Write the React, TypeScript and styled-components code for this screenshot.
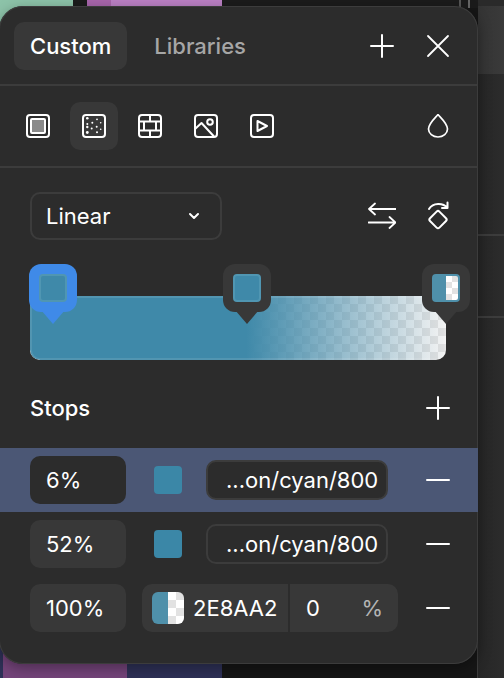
import styled, { createGlobalStyle } from "styled-components";

const GlobalStyle = createGlobalStyle`
  html, body {
    margin: 0;
    padding: 0;
    background: #161616;
  }
  * {
    box-sizing: border-box;
  }
`;

const CHECKER =
  "repeating-conic-gradient(#e0e0e0 0% 25%, #f3f3f3 0% 50%) 0 0 / 16px 16px";

const Scene = styled.div`
  position: relative;
  width: 504px;
  height: 678px;
  overflow: hidden;
  font-family: Inter, "Liberation Sans", sans-serif;
  color: #fff;
`;

// what shows around the popover
const Patch = styled.div<{ $x: number; $y: number; $w: number; $h: number; $bg: string }>`
  position: absolute;
  left: ${(p) => p.$x}px;
  top: ${(p) => p.$y}px;
  width: ${(p) => p.$w}px;
  height: ${(p) => p.$h}px;
  background: ${(p) => p.$bg};
`;

const Panel = styled.div`
  position: relative;
  width: 479px;
  height: 658px;
  margin: 6px 0 0 -1px;
  padding-left: 1px;
  background: #2c2c2c;
  border-radius: 24px;
  box-shadow: inset 0 0 0 1px #3c3c3c, 0 4px 14px rgba(0, 0, 0, 0.35);
`;

const Header = styled.div`
  display: flex;
  align-items: center;
  height: 80px;
  padding: 16px 16px 14px 14px;
  border-bottom: 2px solid #3c3c3c;
`;

const Tab = styled.div<{ $active?: boolean }>`
  display: flex;
  align-items: center;
  height: 48px;
  padding: 0 16px;
  margin-right: 9px;
  border-radius: 10px;
  font-size: 22px;
  font-weight: 500;
  color: ${(p) => (p.$active ? "#ffffff" : "#a6a6a6")};
  background: ${(p) => (p.$active ? "#383838" : "transparent")};

  & + & {
    margin-left: 2px;
  }
`;

const Spacer = styled.div`
  flex: 1;
`;

const Actions = styled.div`
  display: flex;
  gap: 8px;
`;

const IconButton = styled.div<{ $active?: boolean }>`
  display: flex;
  align-items: center;
  justify-content: center;
  flex: none;
  width: 48px;
  height: 48px;
  border-radius: 10px;
  background: ${(p) => (p.$active ? "#383838" : "transparent")};
`;

const Toolbar = styled.div`
  display: flex;
  align-items: center;
  gap: 8px;
  height: 82px;
  padding: 0 16px 0 14px;
  border-bottom: 2px solid #3c3c3c;
`;

const ControlRow = styled.div`
  display: flex;
  align-items: center;
  gap: 8px;
  padding: 24px 16px 0 30px;
`;

const Select = styled.div`
  display: flex;
  align-items: center;
  justify-content: space-between;
  width: 192px;
  height: 48px;
  padding: 0 20px 0 14px;
  border: 2px solid #3c3c3c;
  border-radius: 10px;
  font-size: 22px;
`;

const Track = styled.div`
  position: relative;
  width: 416px;
  height: 96px;
  margin: 24px 0 0 30px;
`;

const Bar = styled.div`
  position: absolute;
  left: 0;
  right: 0;
  bottom: 0;
  height: 64px;
  border-radius: 10px;
  overflow: hidden;
  background: ${CHECKER};

  &::after {
    content: "";
    position: absolute;
    inset: 0;
    border-radius: 10px;
    background: linear-gradient(to right, #3f89a9 52%, rgba(63, 137, 169, 0) 100%);
    box-shadow: inset 0 0 0 2px rgba(255, 255, 255, 0.1);
  }
`;

const Pin = styled.div<{ $left: number; $active?: boolean }>`
  position: absolute;
  top: 0;
  left: ${(p) => p.$left}px;
  display: flex;
  align-items: center;
  justify-content: center;
  width: 48px;
  height: 48px;
  border-radius: 12px;
  background: ${(p) => (p.$active ? "#3f8ae8" : "#383838")};

  &::after {
    content: "";
    position: absolute;
    left: 12px;
    top: 46px;
    width: 24px;
    height: 14px;
    background: inherit;
    clip-path: polygon(0 0, 100% 0, 50% 100%);
  }
`;

const PinSwatch = styled.div<{ $split?: boolean }>`
  width: 28px;
  height: 28px;
  border-radius: 4px;
  border: 2px solid ${(p) => (p.$split ? "#4f90aa" : "#5096b2")};
  background: ${(p) =>
    p.$split
      ? `linear-gradient(to right, #4f90aa 50%, transparent 50%), repeating-conic-gradient(#e2e2e2 0% 25%, #ffffff 0% 50%) 0 0 / 12px 12px`
      : "#3f89a9"};
`;

const StopsHeader = styled.div`
  display: flex;
  align-items: center;
  justify-content: space-between;
  height: 48px;
  margin: 24px 16px 16px 30px;
  font-size: 22px;
  font-weight: 500;
`;

const StopRow = styled.div<{ $selected?: boolean }>`
  display: flex;
  align-items: center;
  height: 64px;
  padding: 0 16px 0 30px;
  background: ${(p) => (p.$selected ? "#4b5775" : "transparent")};
`;

const Position = styled.div<{ $selected?: boolean }>`
  display: flex;
  align-items: center;
  flex: none;
  width: 96px;
  height: 48px;
  padding-left: 16px;
  border-radius: 10px;
  font-size: 22px;
  background: ${(p) => (p.$selected ? "#2c2c2c" : "#383838")};
`;

const Swatch = styled.div`
  flex: none;
  width: 28px;
  height: 28px;
  margin: 0 24px 0 28px;
  border-radius: 4px;
  background: #3b87a7;
`;

const Token = styled.div<{ $selected?: boolean }>`
  display: flex;
  align-items: center;
  flex: none;
  width: 182px;
  height: 40px;
  padding-left: 18px;
  border: 2px solid #3c3c3c;
  border-radius: 10px;
  font-size: 22px;
  white-space: nowrap;
  background: ${(p) => (p.$selected ? "#2c2c2c" : "transparent")};
`;

const ColorField = styled.div`
  display: flex;
  align-items: center;
  flex: none;
  width: 256px;
  height: 48px;
  margin-left: 16px;
  border-radius: 10px;
  background: #383838;
  font-size: 22px;
`;

const HexPart = styled.div`
  display: flex;
  align-items: center;
  gap: 9px;
  width: 148px;
  height: 100%;
  padding-left: 10px;
  border-right: 2px solid #2c2c2c;
`;

const HexSwatch = styled.div`
  flex: none;
  width: 32px;
  height: 32px;
  border-radius: 6px;
  background: linear-gradient(to right, #4f90aa 50%, transparent 50%),
    repeating-conic-gradient(#e2e2e2 0% 25%, #ffffff 0% 50%) 0 0 / 16px 16px;
`;

const AlphaPart = styled.div`
  display: flex;
  align-items: center;
  justify-content: space-between;
  flex: 1;
  padding: 0 15px 0 16px;
`;

const Unit = styled.span`
  color: #b4b4b4;
`;

const RowEnd = styled.div`
  display: flex;
  align-items: center;
  justify-content: center;
  flex: none;
  width: 48px;
  margin-left: auto;
`;

const Line = ({ d, size = 24, weight = 2 }: { d: string; size?: number; weight?: number }) => (
  <svg width={size} height={size} viewBox={`0 0 ${size} ${size}`} fill="none" stroke="#fff" strokeWidth={weight} strokeLinecap="round" strokeLinejoin="round">
    <path d={d} />
  </svg>
);

const Frame = ({ children }: { children: React.ReactNode }) => (
  <svg width="24" height="24" viewBox="0 0 24 24" fill="none" stroke="#fff" strokeWidth="2" strokeLinejoin="round">
    <rect x="1" y="1" width="22" height="22" rx="3" />
    {children}
  </svg>
);

const DOTS = [
  [5.3, 4.3, 1.3], [15, 5.3, 0.9], [5.3, 10, 1], [10.3, 8.7, 1], [18.7, 8.7, 0.8],
  [5.3, 13, 1.2], [14.7, 12.7, 1], [9.7, 14.5, 1], [18.7, 15.3, 0.8], [5.3, 18.5, 1.4], [15, 18.3, 1],
];

const PLUS = "M12 1v22M1 12h22";
const MINUS = "M1 12h22";

export default function App() {
  return (
    <Scene>
      <GlobalStyle />
      <Patch $x={0} $y={0} $w={73} $h={40} $bg="#8dc3a9" />
      <Patch $x={73} $y={0} $w={14} $h={8} $bg="#1b1b1b" />
      <Patch $x={87} $y={0} $w={135} $h={8} $bg="linear-gradient(to right, #a866ac 0 24px, #bb80c4 24px)" />
      <Patch $x={222} $y={0} $w={282} $h={8} $bg="#1b1b1b" />
      <Patch $x={459} $y={0} $w={2} $h={8} $bg="#555" />
      <Patch $x={468} $y={0} $w={2} $h={8} $bg="#666" />
      <Patch $x={478} $y={0} $w={26} $h={6} $bg="#2a2a2a" />
      <Patch $x={478} $y={6} $w={26} $h={68} $bg="linear-gradient(to right, #343434, #3a3a3a)" />
      <Patch $x={478} $y={74} $w={26} $h={604} $bg="linear-gradient(to right, #262626, #2c2c2c)" />
      <Patch $x={478} $y={234} $w={26} $h={2} $bg="#3c3c3c" />
      <Patch $x={478} $y={316} $w={26} $h={2} $bg="#3c3c3c" />
      <Patch $x={0} $y={620} $w={3} $h={58} $bg="#2e3157" />
      <Patch $x={3} $y={620} $w={124} $h={58} $bg="#74447a" />
      <Patch $x={127} $y={620} $w={95} $h={58} $bg="#2e3157" />
      <Patch $x={477} $y={620} $w={1} $h={58} $bg="#3c3c3c" />

      <Panel>
        <Header>
          <Tab $active>Custom</Tab>
          <Tab>Libraries</Tab>
          <Spacer />
          <Actions>
            <IconButton><Line d={PLUS} /></IconButton>
            <IconButton><Line d="M2 2l20 20M22 2L2 22" weight={1.8} /></IconButton>
          </Actions>
        </Header>

        <Toolbar>
          <IconButton>
            <Frame>
              <rect x="5" y="5" width="14" height="14" rx="1" fill="#8a8a8a" />
            </Frame>
          </IconButton>
          <IconButton $active>
            <Frame>
              {DOTS.map(([x, y, r]) => (
                <circle key={`${x}-${y}`} cx={x} cy={y} r={r} fill="#fff" stroke="none" />
              ))}
            </Frame>
          </IconButton>
          <IconButton>
            <Frame>
              <path d="M1 7.5h22M1 16.5h22M12 1v6.5M12 16.5V23M6 7.5v9M18 7.5v9" />
            </Frame>
          </IconButton>
          <IconButton>
            <Frame>
              <circle cx="16" cy="8" r="2.8" />
              <path d="M1 15l6.5-6L20 22.5" />
            </Frame>
          </IconButton>
          <IconButton>
            <Frame>
              <path d="M7.5 7l9.5 5-9.5 5z" />
            </Frame>
          </IconButton>
          <Spacer />
          <IconButton>
            <Line d="M12 0.5C9 4 2.5 9.5 2.5 15a9.5 8 0 0 0 19 0C21.5 9.5 15 4 12 0.5Z" weight={1.7} />
          </IconButton>
        </Toolbar>

        <ControlRow>
          <Select>
            Linear
            <svg width="12" height="8" viewBox="0 0 12 8" fill="none" stroke="#fff" strokeWidth="2" strokeLinecap="round" strokeLinejoin="round">
              <path d="M2 2l4 4 4-4" />
            </svg>
          </Select>
          <Spacer />
          <IconButton>
            <Line size={28} weight={1.8} d="M1 7h27M1 7l6-5.5M1 7l6 5.5M0.5 20.5h27M27.5 20.5l-6-5.5M27.5 20.5l-6 5.5" />
          </IconButton>
          <IconButton>
            <svg width="28" height="30" viewBox="0 0 28 30" fill="none" stroke="#fff" strokeWidth="2" strokeLinecap="round" strokeLinejoin="round">
              <path d="M5 8C9 1.5 19 1.5 23.5 7M23.5 1.5V7H18" />
              <path d="M12.6 10.6a2 2 0 0 1 2.8 0l6.6 6.6a2 2 0 0 1 0 2.8l-6.6 6.6a2 2 0 0 1-2.8 0L6 20a2 2 0 0 1 0-2.8z" />
            </svg>
          </IconButton>
        </ControlRow>

        <Track>
          <Bar />
          <Pin $left={-1} $active><PinSwatch /></Pin>
          <Pin $left={193}><PinSwatch /></Pin>
          <Pin $left={392}><PinSwatch $split /></Pin>
        </Track>

        <StopsHeader>
          Stops
          <IconButton><Line d={PLUS} /></IconButton>
        </StopsHeader>

        <StopRow $selected>
          <Position $selected>6%</Position>
          <Swatch />
          <Token $selected>...on/cyan/800</Token>
          <RowEnd><Line d={MINUS} /></RowEnd>
        </StopRow>
        <StopRow>
          <Position>52%</Position>
          <Swatch />
          <Token>...on/cyan/800</Token>
          <RowEnd><Line d={MINUS} /></RowEnd>
        </StopRow>
        <StopRow>
          <Position>100%</Position>
          <ColorField>
            <HexPart>
              <HexSwatch />
              2E8AA2
            </HexPart>
            <AlphaPart>
              0
              <Unit>%</Unit>
            </AlphaPart>
          </ColorField>
          <RowEnd><Line d={MINUS} /></RowEnd>
        </StopRow>
      </Panel>
    </Scene>
  );
}
